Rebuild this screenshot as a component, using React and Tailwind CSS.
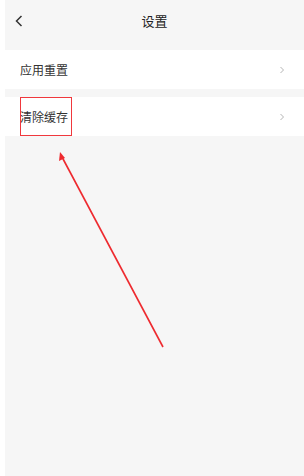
import React from 'react';

const rows = ['应用重置', '清除缓存'];

const Chevron = () => (
  <svg className="w-[6px] h-[8px] text-[#b5b5b5]" viewBox="0 0 6 8" fill="none" stroke="currentColor" strokeWidth="1">
    <path d="M1.5 1l3 3-3 3" />
  </svg>
);

export default function App() {
  return (
    <div className="relative w-[304px] h-[476px] bg-white pl-[5px] font-['Noto_Sans_CJK_SC','Noto_Sans',sans-serif]">
      <div className="flex flex-col h-full bg-[#f6f6f6]">
        {/* header */}
        <div className="relative h-[50px] flex items-center justify-center">
          <svg className="absolute left-[10px] top-[15px] w-[8px] h-[12px] text-[#333]" viewBox="0 0 8 12" fill="none" stroke="currentColor" strokeWidth="1.5">
            <path d="M6.5 1L1.5 6l5 5" />
          </svg>
          <span className="text-[13px] text-[#222] -mt-[8px]">设置</span>
        </div>

        <div className="flex flex-col gap-[8px]">
          {rows.map(label => (
            <div key={label} className="h-[39px] bg-white flex items-center justify-between pl-[15px] pr-[19px]">
              <span className="text-[12px] text-[#333]">{label}</span>
              <Chevron />
            </div>
          ))}
        </div>
      </div>

      {/* annotation: red box */}
      <div className="absolute left-[20px] top-[97px] w-[52px] h-[39px] border border-solid border-[#f0383d]" />

      {/* annotation: arrow */}
      <svg className="absolute left-0 top-0 w-[304px] h-[476px] pointer-events-none" viewBox="0 0 304 476">
        <line x1="163" y1="347" x2="62" y2="157" stroke="#ee2a2f" strokeWidth="1.6" />
        <polygon points="60,152 59,161 65,158" fill="#ee2a2f" />
      </svg>
    </div>
  );
}
